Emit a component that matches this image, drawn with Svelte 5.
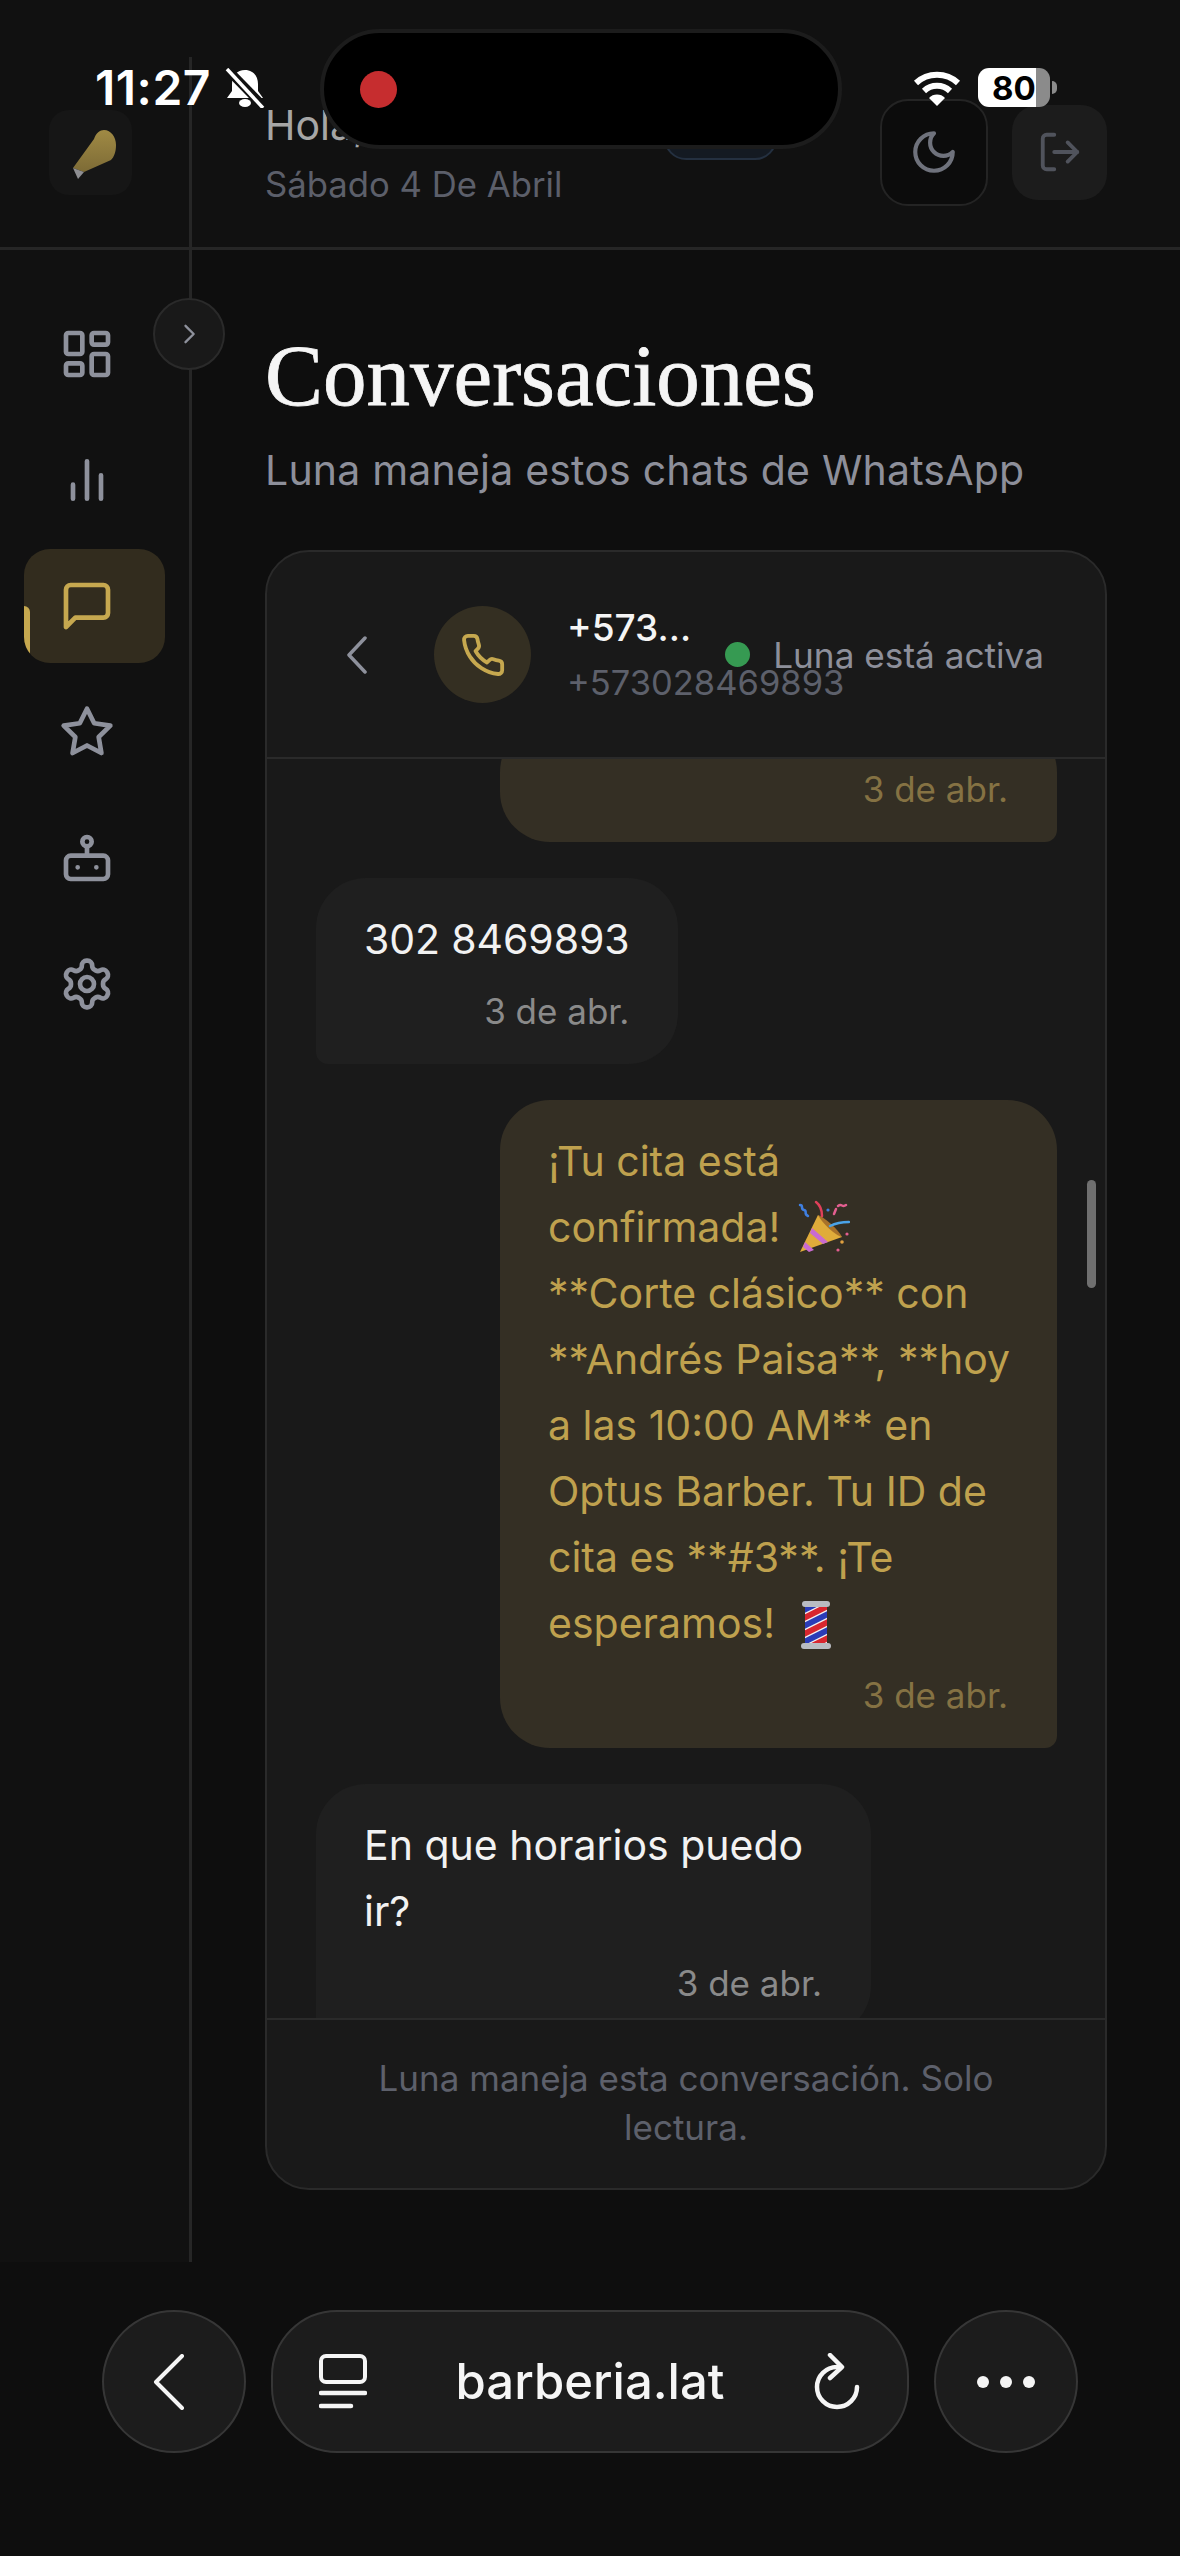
<script>
  const nav = ["grid", "bars", "chat", "star", "bot", "gear"];
  const sentLines = [
    "¡Tu cita está",
    "confirmada!",
    "**Corte clásico** con",
    "**Andrés Paisa**, **hoy",
    "a las 10:00 AM** en",
    "Optus Barber. Tu ID de",
    "cita es **#3**. ¡Te",
    "esperamos!",
  ];
</script>

<div class="page">
  <div class="status">
    <div class="status-left">
      <span class="clock">11:27</span>
      <svg class="bell" viewBox="0 0 40 40" width="40" height="40">
        <path fill="#fff" d="M20 2c-8 0-13 6-13 14v7l-5 7h36l-5-7v-7C33 8 28 2 20 2z" />
        <ellipse fill="#fff" cx="20" cy="35" rx="6" ry="4" />
        <path stroke="#111" stroke-width="9" d="M4 3l34 35" />
        <path stroke="#fff" stroke-width="3.5" d="M2 1l36 39" />
      </svg>
    </div>
    <div class="island"><span class="rec"></span></div>
    <div class="status-right">
      <svg viewBox="0 0 48 36" width="48" height="36">
        <g fill="none" stroke="#fff" stroke-width="6">
          <path d="M3 13a31 31 0 0 1 42 0" />
          <path d="M11 21a19 19 0 0 1 26 0" />
        </g>
        <path fill="#fff" d="M24 36l-8-8a11 11 0 0 1 16 0z" />
      </svg>
      <div class="battery"><span>80</span></div>
      <span class="nub"></span>
    </div>
  </div>

  <header class="topbar">
    <div class="brand">
      <div class="logo">
        <svg viewBox="60 125 60 60" width="60" height="60">
          <defs>
            <linearGradient id="brush" x1="0" y1="0" x2="0" y2="1">
              <stop offset="0" stop-color="#a08a44" />
              <stop offset="1" stop-color="#7d6b36" />
            </linearGradient>
          </defs>
          <path fill="url(#brush)" d="M93 142c2-6 6-9 10-9 7 0 12 7 12 15 0 7-2 12-5 15l-27 12-11-4z" />
          <path fill="#8e8e92" d="M72 171l11 4-6 7z" />
        </svg>
      </div>
    </div>
    <div class="topbar-main">
      <div class="greeting">
        <div class="hello-row">
          <span class="hello">Hola, <b>Optus Barber</b></span>
          <span class="plan"></span>
        </div>
        <div class="date">Sábado 4 De Abril</div>
      </div>
      <div class="actions">
        <button class="theme" aria-label="tema">
          <svg viewBox="0 0 24 24" width="50" height="50"><path d="M12 3a6 6 0 0 0 9 9 9 9 0 1 1-9-9Z" /></svg>
        </button>
        <button class="logout" aria-label="salir">
          <svg viewBox="0 0 24 24" width="46" height="46">
            <path d="M9 21H5a2 2 0 0 1-2-2V5a2 2 0 0 1 2-2h4" />
            <path d="M16 17l5-5-5-5" />
            <path d="M21 12H9" />
          </svg>
        </button>
      </div>
    </div>
  </header>

  <div class="shell">
    <aside class="sidebar">
      <button class="collapse" aria-label="expandir">
        <svg viewBox="0 0 24 24" width="28" height="28"><path d="M9 5l7 7-7 7" /></svg>
      </button>
      {#each nav as item}
        <div class="nav-item" class:active={item === "chat"}>
          <svg viewBox="0 0 24 24" width="56" height="56">
            {#if item === "grid"}
              <rect x="3" y="3" width="7" height="9" rx="1" />
              <rect x="14" y="3" width="7" height="5" rx="1" />
              <rect x="14" y="12" width="7" height="9" rx="1" />
              <rect x="3" y="16" width="7" height="5" rx="1" />
            {:else if item === "bars"}
              <path d="M18 20V10M12 20V4M6 20v-6" />
            {:else if item === "chat"}
              <path d="M21 15a2 2 0 0 1-2 2H7l-4 4V5a2 2 0 0 1 2-2h14a2 2 0 0 1 2 2z" />
            {:else if item === "star"}
              <polygon points="12 2 15.09 8.26 22 9.27 17 14.14 18.18 21.02 12 17.77 5.82 21.02 7 14.14 2 9.27 8.91 8.26 12 2" />
            {:else if item === "bot"}
              <rect x="3" y="11" width="18" height="10" rx="2" />
              <circle cx="12" cy="5" r="2" />
              <path d="M12 7v4M8 16h.01M16 16h.01" />
            {:else}
              <path d="M12.22 2h-.44a2 2 0 0 0-2 2v.18a2 2 0 0 1-1 1.73l-.43.25a2 2 0 0 1-2 0l-.15-.08a2 2 0 0 0-2.73.73l-.22.38a2 2 0 0 0 .73 2.73l.15.1a2 2 0 0 1 1 1.72v.51a2 2 0 0 1-1 1.74l-.15.09a2 2 0 0 0-.73 2.73l.22.38a2 2 0 0 0 2.73.73l.15-.08a2 2 0 0 1 2 0l.43.25a2 2 0 0 1 1 1.73V20a2 2 0 0 0 2 2h.44a2 2 0 0 0 2-2v-.18a2 2 0 0 1 1-1.73l.43-.25a2 2 0 0 1 2 0l.15.08a2 2 0 0 0 2.73-.73l.22-.39a2 2 0 0 0-.73-2.73l-.15-.08a2 2 0 0 1-1-1.74v-.5a2 2 0 0 1 1-1.74l.15-.09a2 2 0 0 0 .73-2.73l-.22-.38a2 2 0 0 0-2.73-.73l-.15.08a2 2 0 0 1-2 0l-.43-.25a2 2 0 0 1-1-1.73V4a2 2 0 0 0-2-2z" />
              <circle cx="12" cy="12" r="3" />
            {/if}
          </svg>
        </div>
      {/each}
    </aside>

    <main class="content">
      <h1>Conversaciones</h1>
      <p class="lead">Luna maneja estos chats de WhatsApp</p>

      <section class="card">
        <div class="chat-head">
          <div class="contact">
            <svg class="back" viewBox="0 0 22 38" width="22" height="38"><path d="M19 2L3 19l16 17" /></svg>
            <div class="avatar">
              <svg viewBox="0 0 24 24" width="46" height="46">
                <path d="M22 16.92v3a2 2 0 0 1-2.18 2 19.79 19.79 0 0 1-8.63-3.07 19.5 19.5 0 0 1-6-6 19.79 19.79 0 0 1-3.07-8.67A2 2 0 0 1 4.11 2h3a2 2 0 0 1 2 1.72 12.84 12.84 0 0 0 .7 2.81 2 2 0 0 1-.45 2.11L8.09 9.91a16 16 0 0 0 6 6l1.27-1.27a2 2 0 0 1 2.11-.45 12.84 12.84 0 0 0 2.81.7A2 2 0 0 1 22 16.92z" />
              </svg>
            </div>
            <div class="who">
              <div class="name">+573...</div>
              <div class="number">+573028469893</div>
            </div>
          </div>
          <div class="state"><span class="dot"></span>Luna está activa</div>
        </div>

        <div class="messages">
          <div class="bubble sent first"><div class="time">3 de abr.</div></div>

          <div class="bubble received"><div class="text digits">302 8469893</div><div class="time">3 de abr.</div></div>

          <div class="bubble sent">
            {#each sentLines as line, i}
              <div class="text">
                {line}
                {#if i === 1}
                  <svg class="emoji" viewBox="0 0 52 54" width="52" height="54">
                    <path fill="#e0ac3a" d="M2 52L20 15l24 22z" />
                    <path fill="#c96bd0" d="M14 28l16 14-5 2-13-11zM7 42l9 8-5 2-6-5z" />
                    <path fill="#a8722a" d="M20 15c6 2 20 14 24 22-6-1-20-14-24-22z" />
                    <g fill="none" stroke-width="2.5" stroke-linecap="round">
                      <path stroke="#3f7fe0" d="M2 5c4 0 0 4 4 5s-1 4 4 6" />
                      <path stroke="#e0405a" d="M18 2c4 3 6 8 6 14" />
                      <path stroke="#e35f90" d="M40 6c4-3 4 2 8-1M36 14l2-5" />
                      <path stroke="#4aa3e8" d="M32 26c6-3 12-4 19-4" />
                    </g>
                    <circle cx="44" cy="42" r="1.8" fill="#e0a040" /><circle cx="49" cy="34" r="1.6" fill="#e35f90" />
                    <circle cx="40" cy="50" r="1.6" fill="#e35f90" /><circle cx="30" cy="10" r="1.6" fill="#3f7fe0" />
                  </svg>
                {:else if i === 7}
                  <svg class="emoji pole" viewBox="0 0 32 50" width="32" height="50">
                    <defs><clipPath id="poleBody"><rect x="5" y="6" width="22" height="38" /></clipPath></defs>
                    <rect x="5" y="6" width="22" height="38" fill="#f2f2f2" />
                    <g clip-path="url(#poleBody)" stroke-width="6">
                      <path stroke="#d8262f" d="M0 20L32 4M0 36L32 20M0 52L32 36" />
                      <path stroke="#2a3cb8" d="M0 12L32-4M0 28L32 12M0 44L32 28" />
                    </g>
                    <rect x="2" y="1" width="28" height="6" rx="3" fill="#b9bcc2" />
                    <rect x="1" y="43" width="30" height="6" rx="3" fill="#b9bcc2" />
                  </svg>
                {/if}
              </div>
            {/each}
            <div class="time">3 de abr.</div>
          </div>

          <div class="bubble received wide">
            <div class="text">En que horarios puedo</div>
            <div class="text">ir?</div>
            <div class="time">3 de abr.</div>
          </div>

          <span class="scrollbar"></span>
        </div>

        <div class="chat-foot">Luna maneja esta conversación. Solo<br />lectura.</div>
      </section>
    </main>
  </div>

  <nav class="browser">
    <button class="round" aria-label="atrás">
      <svg class="nudge" viewBox="0 0 32 56" width="32" height="56"><path d="M29 2L3 28l26 26" /></svg>
    </button>
    <div class="urlbar">
      <svg viewBox="0 0 48 56" width="48" height="56" class="tabs">
        <rect x="2" y="2" width="44" height="26" rx="5" />
        <path d="M2 39h44M2 52h30" stroke-width="4.5" />
      </svg>
      <span class="url">barberia.lat</span>
      <svg viewBox="0 0 48 58" width="48" height="58" class="reload">
        <path d="M24 14A20 20 0 1 0 44 34" />
        <path d="M17 2l12 12-12 11" />
      </svg>
    </div>
    <button class="round" aria-label="más">
      <svg viewBox="0 0 60 14" width="60" height="14"><circle cx="7" cy="7" r="6" /><circle cx="30" cy="7" r="6" /><circle cx="53" cy="7" r="6" /></svg>
    </button>
  </nav>
</div>

<style>
:global(body) {
  margin: 0;
  background: #0e0e0e;
}

.page {
  position: relative;
  width: 1180px;
  height: 2556px;
  overflow: hidden;
  background: #0e0e0e;
  font-family: "Inter", "Liberation Sans", sans-serif;
}

button {
  padding: 0;
  display: flex;
  align-items: center;
  justify-content: center;
}

/* status bar sits over the page */
.status {
  position: absolute;
  top: 0;
  left: 0;
  width: 100%;
  z-index: 5;
}
.status-left {
  position: absolute;
  left: 95px;
  top: 66px;
  display: flex;
  align-items: center;
  gap: 14px;
  color: #fff;
}
.clock {
  font-size: 48px;
  font-weight: 600;
  line-height: 44px;
  letter-spacing: 0.5px;
}
.island {
  position: absolute;
  left: 320px;
  top: 29px;
  width: 522px;
  height: 120px;
  box-sizing: border-box;
  display: flex;
  align-items: center;
  padding-left: 36px;
  background: #000;
  border: 4px solid #1c1c1c;
  border-radius: 60px;
}
.rec {
  width: 37px;
  height: 37px;
  border-radius: 50%;
  background: #c62d2f;
}
.status-right {
  position: absolute;
  left: 913px;
  top: 68px;
  display: flex;
  align-items: center;
  gap: 17px;
}
.battery {
  width: 72px;
  height: 39px;
  border-radius: 11px;
  background: linear-gradient(90deg, #fff 80%, #8b8b8b 80%);
  display: flex;
  align-items: center;
  justify-content: flex-start;
  padding-left: 14px;
  box-sizing: border-box;
}
.battery span {
  color: #000;
  font-size: 33px;
  font-weight: 700;
}
.nub {
  width: 5px;
  height: 13px;
  margin-left: -15px;
  background: #8b8b8b;
  border-radius: 0 6px 6px 0;
}

.topbar {
  height: 247px;
  display: flex;
  background: #111;
  border-bottom: 3px solid #262626;
}
.brand {
  width: 192px;
  box-sizing: border-box;
  margin-top: 57px;
  padding-left: 49px;
  display: flex;
  align-items: center;
  border-right: 3px solid #262626;
}
.logo {
  width: 83px;
  height: 85px;
  border-radius: 20px;
  background: #161616;
  display: flex;
  align-items: center;
  justify-content: center;
}
.topbar-main {
  flex: 1;
  display: flex;
  align-items: center;
  justify-content: space-between;
  margin-top: 57px;
  padding: 0 73px;
}
.greeting {
  display: flex;
  flex-direction: column;
  gap: 3px;
  padding-bottom: 9px;
}
.hello-row {
  display: flex;
  align-items: center;
  gap: 24px;
  height: 70px;
}
.hello {
  width: 375px;
  white-space: nowrap;
  font-size: 41px;
  color: #a6a6a6;
}
.hello b {
  font-weight: 500;
  color: #c0a24e;
}
.plan {
  width: 113px;
  height: 70px;
  box-sizing: border-box;
  border: 2px solid #243040;
  border-radius: 22px;
  background: #141a22;
}
.date {
  font-size: 34.7px;
  line-height: 42px;
  color: #5c5f6a;
}
.actions {
  display: flex;
  align-items: center;
  gap: 24px;
}
.theme {
  width: 108px;
  height: 107px;
  box-sizing: border-box;
  background: #0c0c0c;
  border: 2px solid #242424;
  border-radius: 28px;
}
.logout {
  width: 95px;
  height: 95px;
  background: #1c1c1c;
  border: none;
  border-radius: 26px;
}
.actions svg {
  fill: none;
  stroke: #6f727c;
  stroke-width: 2;
  stroke-linecap: round;
  stroke-linejoin: round;
}
.logout svg {
  stroke: #50535c;
}

.shell {
  height: 2012px;
  display: flex;
}
.sidebar {
  position: relative;
  width: 192px;
  box-sizing: border-box;
  padding: 47px 0 0 24px;
  display: flex;
  flex-direction: column;
  gap: 12px;
  background: #111;
  border-right: 3px solid #262626;
}
.collapse {
  position: absolute;
  left: 153px;
  top: 48px;
  width: 72px;
  height: 72px;
  background: #191919;
  border: 2px solid #2a2a2a;
  border-radius: 50%;
}
.collapse svg {
  fill: none;
  stroke: #8e919c;
  stroke-width: 2;
  stroke-linecap: round;
  stroke-linejoin: round;
}
.nav-item {
  position: relative;
  width: 141px;
  height: 114px;
  box-sizing: border-box;
  padding-left: 35px;
  display: flex;
  align-items: center;
  border-radius: 26px;
  overflow: hidden;
}
.nav-item svg {
  fill: none;
  stroke: #8e919c;
  stroke-width: 2;
  stroke-linecap: round;
  stroke-linejoin: round;
}
.nav-item.active {
  background: #322c1e;
}
.nav-item.active svg {
  stroke: #c6a84f;
}
.nav-item.active::before {
  content: "";
  position: absolute;
  left: 0;
  top: 57px;
  width: 6px;
  height: 49px;
  background: #c6a84f;
  border-radius: 0 6px 0 0;
}

.content {
  flex: 1;
  box-sizing: border-box;
  padding: 0 73px;
  min-width: 0;
}
h1 {
  margin: 72px 0 0;
  font-family: "Liberation Serif", serif;
  font-size: 87px;
  line-height: 108px;
  font-weight: 400;
  -webkit-text-stroke: 0.8px #f5f5f5;
  color: #f5f5f5;
}
.lead {
  margin: 13px 0 0;
  font-size: 41px;
  line-height: 54px;
  letter-spacing: 0.2px;
  color: #8d8f9a;
}

.card {
  height: 1640px;
  margin-top: 53px;
  box-sizing: border-box;
  display: flex;
  flex-direction: column;
  background: #191919;
  border: 2px solid #2a2a2a;
  border-radius: 44px;
  overflow: hidden;
}
.chat-head {
  height: 207px;
  flex: none;
  box-sizing: border-box;
  display: flex;
  align-items: center;
  justify-content: space-between;
  padding: 0 61px 0 79px;
  border-bottom: 2px solid #2a2a2a;
}
.contact {
  display: flex;
  align-items: center;
  gap: 66px;
}
.back {
  fill: none;
  stroke: #8e919c;
  stroke-width: 3.5;
  stroke-linecap: round;
  stroke-linejoin: round;
}
.avatar {
  width: 97px;
  height: 97px;
  border-radius: 50%;
  background: #342f22;
  display: flex;
  align-items: center;
  justify-content: center;
}
.avatar svg {
  fill: none;
  stroke: #c6a84f;
  stroke-width: 2;
  stroke-linecap: round;
  stroke-linejoin: round;
}
.who {
  width: 140px;
  margin-left: -30px;
  white-space: nowrap;
}
.name {
  font-size: 37px;
  line-height: 48px;
  font-weight: 500;
  color: #f5f5f5;
}
.number {
  margin-top: 9px;
  font-size: 34.5px;
  line-height: 44px;
  color: #5d606b;
}
.state {
  display: flex;
  align-items: center;
  gap: 23px;
  font-size: 35.2px;
  color: #8d8f9a;
}
.dot {
  width: 25px;
  height: 25px;
  border-radius: 50%;
  background: #369a52;
}

.messages {
  position: relative;
  flex: 1;
  min-height: 0;
  overflow: hidden;
  display: flex;
  flex-direction: column;
  gap: 36px;
  padding: 0 48px 0 49px;
}
.bubble {
  flex: none;
  box-sizing: border-box;
  padding: 28px 49px 28px 48px;
  border-radius: 50px;
}
.sent {
  width: 557px;
  align-self: flex-end;
  background: #342f24;
  color: #bfa14e;
  border-bottom-right-radius: 12px;
}
.first {
  margin-top: -37px;
}
.received {
  align-self: flex-start;
  background: #1f1f1f;
  color: #f2f2f2;
  border-bottom-left-radius: 12px;
}
.wide {
  width: 555px;
}
.text {
  font-size: 41px;
  line-height: 66px;
  white-space: nowrap;
}
.digits {
  letter-spacing: -0.1px;
}
.time {
  margin-top: 14px;
  font-size: 35px;
  line-height: 50px;
  text-align: right;
  color: #8a8a8a;
}
.sent .time {
  color: #857243;
}
.emoji {
  vertical-align: -12px;
  margin-left: 6px;
}
.pole {
  margin-left: 14px;
}
.scrollbar {
  position: absolute;
  right: 9px;
  top: 421px;
  width: 9px;
  height: 108px;
  border-radius: 5px;
  background: #6f6f6f;
}

.chat-foot {
  flex: none;
  height: 170px;
  box-sizing: border-box;
  padding-top: 34px;
  border-top: 2px solid #2a2a2a;
  text-align: center;
  font-size: 35px;
  line-height: 49px;
  color: #5d606b;
}

.browser {
  display: flex;
  align-items: center;
  gap: 25px;
  margin-top: 48px;
  padding-left: 102px;
}
.round {
  width: 144px;
  height: 143px;
  box-sizing: border-box;
  background: #1c1c1c;
  border: 2px solid #363636;
  border-radius: 50%;
}
.round svg path {
  fill: none;
  stroke: #f5f5f5;
  stroke-width: 4;
  stroke-linecap: round;
  stroke-linejoin: round;
}
.round svg circle {
  fill: #f5f5f5;
}
.nudge {
  margin-right: 10px;
}
.urlbar {
  width: 638px;
  height: 143px;
  box-sizing: border-box;
  display: flex;
  align-items: center;
  justify-content: space-between;
  padding: 0 46px;
  background: #1c1c1c;
  border: 2px solid #363636;
  border-radius: 66px;
}
.url {
  font-size: 49px;
  font-weight: 500;
  color: #f5f5f5;
}
.tabs,
.reload {
  fill: none;
  stroke: #f5f5f5;
  stroke-width: 4;
  stroke-linecap: round;
  stroke-linejoin: round;
}
.reload {
  stroke-width: 4.5;
}
</style>
